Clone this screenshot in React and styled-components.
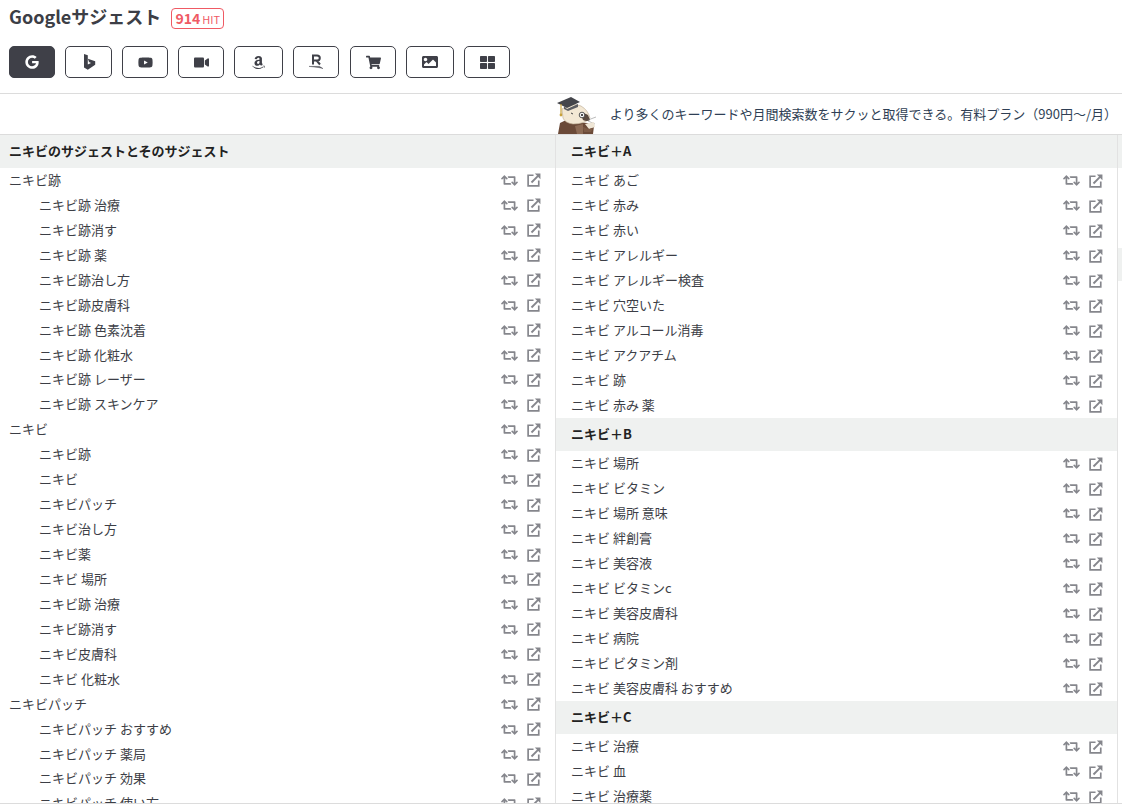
import React from "react";
import styled, { createGlobalStyle } from "styled-components";
import { FaGoogle, FaYoutube, FaVideo, FaAmazon, FaShoppingCart, FaImage, FaThLarge, FaRetweet } from "react-icons/fa";

const Global = createGlobalStyle`
  html, body { margin: 0; padding: 0; height: 100%; overflow: hidden; background: #fff; }
  body { font-family: "Noto Sans CJK JP", "Noto Sans", sans-serif; color: #3c3e46; font-size: 13px; }
`;

const Page = styled.div`
  width: 1122px;
  height: 809px;
  display: flex;
  flex-direction: column;
  overflow: hidden;
`;
const Head = styled.header`
  height: 94px;
  padding: 4px 0 0 9px;
  box-sizing: border-box;
  border-bottom: 1px solid #dcdcdc;
`;
const TitleRow = styled.div`
  display: flex;
  align-items: center;
  height: 28px;
  gap: 10px;
`;
const Title = styled.h1`
  margin: 0 0 3px;
  font-size: 18px;
  line-height: 25px;
  font-weight: 700;
  color: #3c3e46;
`;
const Hit = styled.span`
  display: inline-flex;
  align-items: baseline;
  justify-content: center;
  gap: 2px;
  box-sizing: border-box;
  height: 21px;
  width: 53px;
  margin-top: 1px;
  line-height: 18px;
  border: 1px solid #ef5a64;
  border-radius: 4px;
  color: #ef5a64;
  font-size: 14px;
  font-weight: 700;
  small { font-size: 11px; font-weight: 400; }
`;
const Tools = styled.nav`
  display: flex;
  margin-top: 14px;
`;
const Tool = styled.button`
  box-sizing: border-box;
  width: ${(p) => p.$w}px;
  height: 32px;
  margin-right: ${(p) => p.$gap}px;
  padding: 0;
  display: flex;
  align-items: center;
  justify-content: center;
  border: 1px solid #3f4048;
  border-radius: 5px;
  background: ${(p) => (p.$active ? "#3f4048" : "#fff")};
  color: ${(p) => (p.$active ? "#fff" : "#3f4048")};
`;
const Banner = styled.div`
  height: 41px;
  box-sizing: border-box;
  border-bottom: 1px solid #dcdcdc;
  display: flex;
  justify-content: flex-end;
  align-items: flex-end;
  padding-right: 5px;
`;
const BannerText = styled.span`
  align-self: center;
  margin: 0 0 2px 13px;
  color: #2f3f55;
  font-size: 13px;
`;
const Board = styled.main`
  height: 669px;
  box-sizing: border-box;
  border-bottom: 1px solid #dcdcdc;
  display: flex;
  overflow: hidden;
`;
const Column = styled.section`
  flex: 0 0 ${(p) => p.$w}px;
  box-sizing: border-box;
  border-right: 1px solid #e2e2e2;
`;
const SectionHead = styled.h2`
  margin: 0;
  height: 33px;
  line-height: 31px;
  padding-left: ${(p) => p.$pad}px;
  background: #eff1f0;
  font-size: 13px;
  font-weight: 700;
  color: #222;
`;
const List = styled.ul`
  list-style: none;
  margin: 0;
  padding: 0;
`;
const Row = styled.li`
  height: ${(p) => p.$h}px;
  display: flex;
  align-items: center;
  padding: 0 14px 0 ${(p) => p.$pad}px;
  white-space: nowrap;
  color: #3c3e46;
`;
const Label = styled.span`
  flex: 1;
  line-height: 1;
  padding-bottom: 2px;
`;
const Icons = styled.span`
  display: flex;
  align-items: center;
  gap: 9px;
  color: #85868c;
`;
const Peek = styled.div`
  flex: 0 0 20px;
  display: flex;
  flex-direction: column;
`;
const PeekBand = styled.div`
  height: 33px;
  margin-bottom: 80px;
  background: #eff1f0;
`;

const Bing = ({ size }) => (
  <svg width={size} height={size} viewBox="0 0 16 16" fill="currentColor">
    <path d="M3 0 L6.8 1.3 V10.6 L10 8.9 L8 8 L6.9 4.8 L14.2 7.3 V10.8 L6.8 15.8 L3 13.6 Z" />
  </svg>
);
const Rakuten = ({ size }) => (
  <svg width={size} height={size} viewBox="0 0 16 16" fill="none" stroke="currentColor">
    <path d="M5 10.5 V1.5 H9 Q11.8 1.5 11.8 4 Q11.8 6.5 9 6.5 H5 M8.6 6.5 L12 10.5" strokeWidth="2" />
    <path d="M1 12.4 H11.5 L15 14.6 L11 13.6 Z" fill="currentColor" strokeWidth=".4" />
  </svg>
);
const OpenLink = () => (
  <svg width="14" height="14" viewBox="0 0 15 15" fill="none" stroke="currentColor">
    <path d="M7 2.4 H1.2 V13.8 H12.6 V8" strokeWidth="1.8" />
    <path d="M4.8 10.2 L12.4 2.6" strokeWidth="2" />
    <path d="M8.4 .6 H14.4 V6.6 Z" fill="currentColor" stroke="none" />
  </svg>
);

const Mascot = () => (
  <svg width="40" height="38" viewBox="0 0 40 38" display="block">
    <path d="M1 38 L3 27 Q10 22 20 26 L30 27 L37 30 L36 38 Z" fill="#6b4a38" />
    <path d="M18 30 L26 28 L26 38 L20 38 Z" fill="#8d6b55" />
    <path d="M5 13 Q14 6 24 10 Q31 14 33 22 Q28 28 16 28 Q8 27 6 22 Z" fill="#f3e8d4" stroke="#b8a88e" strokeWidth=".6" />
    <path d="M0 7 L14 1 L23 6 L10 12 Z" fill="#44454b" />
    <path d="M7 10 L10 13 L21 8 L21 11 L11 15 L7 13 Z" fill="#5d5e63" />
    <path d="M4 8 L4 18" stroke="#c9a23c" strokeWidth="1.2" />
    <circle cx="4" cy="19" r="1.4" fill="#c9a23c" />
    <path d="M24 19 Q27 16 31 19 L33 24 Q30 26 26 24 Z" fill="#5a4a40" />
    <circle cx="25" cy="19" r="2.8" fill="#f9f9f9" stroke="#444" strokeWidth=".9" />
    <circle cx="25" cy="19" r="1.1" fill="#222" />
    <path d="M14 17 l2 1" stroke="#444" strokeWidth="1" />
    <path d="M31 24 L39 21 M31 25 L38 28" stroke="#777" strokeWidth=".5" />
    <path d="M28 28 L37 26 L38 31 L32 33 Z" fill="#efe6d6" />
    <path d="M26 31 L32 33 L36 32 L34 36 L27 36 Z" fill="#7c5a45" />
  </svg>
);

const left = [
  ["ニキビ跡", 0], ["ニキビ跡 治療", 1], ["ニキビ跡消す", 1], ["ニキビ跡 薬", 1], ["ニキビ跡治し方", 1], ["ニキビ跡皮膚科", 1], ["ニキビ跡 色素沈着", 1], ["ニキビ跡 化粧水", 1], ["ニキビ跡 レーザー", 1], ["ニキビ跡 スキンケア", 1],
  ["ニキビ", 0], ["ニキビ跡", 1], ["ニキビ", 1], ["ニキビパッチ", 1], ["ニキビ治し方", 1], ["ニキビ薬", 1], ["ニキビ 場所", 1], ["ニキビ跡 治療", 1], ["ニキビ跡消す", 1], ["ニキビ皮膚科", 1], ["ニキビ 化粧水", 1],
  ["ニキビパッチ", 0], ["ニキビパッチ おすすめ", 1], ["ニキビパッチ 薬局", 1], ["ニキビパッチ 効果", 1], ["ニキビパッチ 使い方", 1],
];
const groups = [
  ["ニキビ＋A", ["ニキビ あご", "ニキビ 赤み", "ニキビ 赤い", "ニキビ アレルギー", "ニキビ アレルギー検査", "ニキビ 穴空いた", "ニキビ アルコール消毒", "ニキビ アクアチム", "ニキビ 跡", "ニキビ 赤み 薬"]],
  ["ニキビ＋B", ["ニキビ 場所", "ニキビ ビタミン", "ニキビ 場所 意味", "ニキビ 絆創膏", "ニキビ 美容液", "ニキビ ビタミンc", "ニキビ 美容皮膚科", "ニキビ 病院", "ニキビ ビタミン剤", "ニキビ 美容皮膚科 おすすめ"]],
  ["ニキビ＋C", ["ニキビ 治療", "ニキビ 血", "ニキビ 治療薬"]],
];
const tools = [
  [FaGoogle, 46, 10, 14], [Bing, 47, 10, 16], [FaYoutube, 46, 10, 15], [FaVideo, 46, 10, 15], [FaAmazon, 49, 10, 15],
  [Rakuten, 46, 11, 16], [FaShoppingCart, 46, 10, 15], [FaImage, 48, 10, 16], [FaThLarge, 46, 0, 15],
];

const Actions = () => (
  <Icons>
    <FaRetweet size={17} />
    <OpenLink />
  </Icons>
);

export default function App() {
  return (
    <Page>
      <Global />
      <Head>
        <TitleRow>
          <Title>Googleサジェスト</Title>
          <Hit>914<small>HIT</small></Hit>
        </TitleRow>
        <Tools>
          {tools.map(([I, w, gap, s], i) => (
            <Tool key={i} $w={w} $gap={gap} $active={i === 0}><I size={s} /></Tool>
          ))}
        </Tools>
      </Head>
      <Banner>
        <Mascot />
        <BannerText>より多くのキーワードや月間検索数をサクッと取得できる。有料プラン（990円～/月）</BannerText>
      </Banner>
      <Board>
        <Column $w={556}>
          <SectionHead $pad={9}>ニキビのサジェストとそのサジェスト</SectionHead>
          <List>
            {left.map(([t, s], i) => (
              <Row key={i} $pad={s ? 39 : 9} $h={24.9375}><Label>{t}</Label><Actions /></Row>
            ))}
          </List>
        </Column>
        <Column $w={562}>
          {groups.map(([h, items]) => (
            <div key={h}>
              <SectionHead $pad={15}>{h}</SectionHead>
              <List>
                {items.map((t, i) => (
                  <Row key={i} $pad={15} $h={25}><Label>{t}</Label><Actions /></Row>
                ))}
              </List>
            </div>
          ))}
        </Column>
        <Peek><PeekBand /><PeekBand /></Peek>
      </Board>
    </Page>
  );
}
